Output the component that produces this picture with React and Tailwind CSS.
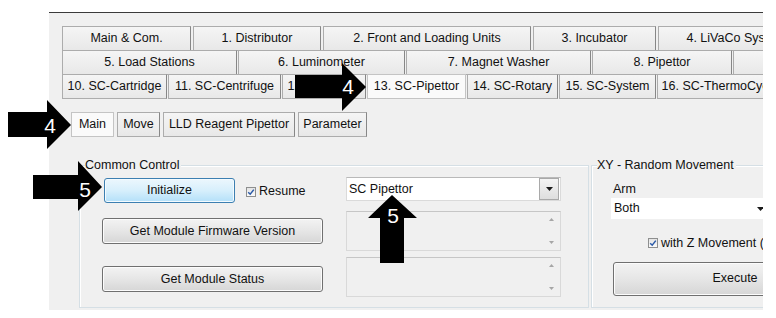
import React from 'react';

const row1 = [
  { label: 'Main & Com.', w: 'w-[129px]' },
  { label: '1. Distributor', w: 'w-[128px]' },
  { label: '2. Front and Loading Units', w: 'w-[208px]' },
  { label: '3. Incubator', w: 'w-[123px]' },
  { label: '4. LiVaCo System', w: 'w-[156px]' },
];

const row2 = [
  { label: '5. Load Stations', w: 'w-[175px]' },
  { label: '6. Luminometer', w: 'w-[167px]' },
  { label: '7. Magnet Washer', w: 'w-[185px]' },
  { label: '8. Pipettor', w: 'w-[140px]' },
  { label: '9. Reagent Storage', w: 'w-[200px]' },
];

const row3 = [
  { label: '10. SC-Cartridge', w: 'w-[105px]' },
  { label: '11. SC-Centrifuge', w: 'w-[113px]' },
  { label: '12. SC-Mixer', w: 'w-[84px]' },
  { label: '13. SC-Pipettor', w: 'w-[99px]', active: true },
  { label: '14. SC-Rotary', w: 'w-[91px]' },
  { label: '15. SC-System', w: 'w-[97px]' },
  { label: '16. SC-ThermoCycler', w: 'w-[130px]' },
];

const subTabs = [
  { label: 'Main', w: 'w-[43px]', active: true },
  { label: 'Move', w: 'w-[43px]' },
  { label: 'LLD Reagent Pipettor', w: 'w-[132px]' },
  { label: 'Parameter', w: 'w-[69px]' },
];

function Tab({ label, w, active }) {
  const look = active
    ? 'bg-[#fafafa] border-[#c4c4c4]'
    : 'bg-gradient-to-b from-[#f5f5f5] to-[#e8e8e8] border-[#acacac] border-r-[#878787]';
  return (
    <div className={`${w} ${look} shrink-0 h-full flex items-center justify-center border whitespace-nowrap overflow-hidden`}>
      {label}
    </div>
  );
}

function Button({ children, className }) {
  return (
    <div
      className={`${className} flex items-center justify-center rounded-[3px] border border-[#707070] bg-gradient-to-b from-[#f3f3f3] via-[#e6e6e6] to-[#d6d6d6] shadow-[inset_0_0_0_1px_#fcfcfc] whitespace-nowrap`}
    >
      {children}
    </div>
  );
}

function Check() {
  return (
    <div className="w-[10px] h-[10px] shrink-0 border border-[#8e8f8f] bg-gradient-to-b from-[#e4e4e4] to-[#fafafa] flex items-center justify-center">
      <svg width="8" height="8" viewBox="0 0 8 8">
        <path d="M1.2 4.2 L3.2 6.2 L6.8 1.6" fill="none" stroke="#2b5aa8" strokeWidth="1.5" />
      </svg>
    </div>
  );
}

function DropArrow() {
  return (
    <svg width="7" height="4" viewBox="0 0 7 4">
      <path d="M0 0 H7 L3.5 4 Z" fill="#1b1b1b" />
    </svg>
  );
}

function ScrollBox() {
  return (
    <div className="h-[40px] border border-[#d9d9d9] border-t-[#c6c6c6] bg-[#f0f0f0] flex justify-end">
      <div className="w-[17px] flex flex-col items-center justify-between py-[6px]">
        <svg width="5" height="3" viewBox="0 0 5 3">
          <path d="M0 3 L2.5 0 L5 3 Z" fill="#a6a6a6" />
        </svg>
        <svg width="5" height="3" viewBox="0 0 5 3">
          <path d="M0 0 H5 L2.5 3 Z" fill="#a6a6a6" />
        </svg>
      </div>
    </div>
  );
}

function GroupBox({ title, className, children }) {
  return (
    <div className={`${className} relative border border-[#d5dfe5] shadow-[inset_1px_1px_0_#ffffff]`}>
      <span className="absolute -top-[9px] left-[5px] bg-[#f0f0f0] pr-[2px] leading-[16px]">{title}</span>
      {children}
    </div>
  );
}

export default function App() {
  return (
    <div
      className="relative w-[776px] h-[318px] bg-white overflow-hidden text-[12.5px] text-[#111] leading-none"
      style={{ fontFamily: '"Liberation Sans", Arial, sans-serif' }}
    >
      {/* main window panel */}
      <div className="ml-[49px] mt-[12px] w-[714px] h-[298px] bg-[#f0f0f0] border-t border-[#3a3a3a] overflow-hidden pl-[13px] pt-[13px]">
        {/* multi-row tabs */}
        <div className="flex gap-[2px] h-[25px]">
          {row1.map((t) => (
            <Tab key={t.label} {...t} />
          ))}
        </div>
        <div className="flex gap-[1px] h-[25px] -mt-px">
          {row2.map((t) => (
            <Tab key={t.label} {...t} />
          ))}
        </div>
        <div className="flex gap-[1px] h-[25px] -mt-px">
          {row3.map((t) => (
            <Tab key={t.label} {...t} />
          ))}
        </div>

        {/* sub tabs */}
        <div className="flex gap-[3px] h-[25px] mt-[13px] ml-[9px]">
          {subTabs.map((t) => (
            <Tab key={t.label} {...t} />
          ))}
        </div>

        {/* group boxes */}
        <div className="flex gap-[2px] mt-[28px] ml-[17px] h-[143px]">
          <GroupBox title="Common Control" className="w-[510px] shrink-0 pl-[22px] pt-[11px] flex">
            <div className="w-[244px] shrink-0 flex flex-col">
              <div className="flex items-center mt-[1px] ml-[2px]">
                <div className="w-[131px] h-[25px] flex items-center justify-center rounded-[3px] border border-[#3c7fb1] bg-gradient-to-b from-[#ecf7fd] via-[#d7effc] to-[#b3e0f9] shadow-[inset_0_0_0_1px_#f4fbff]">
                  Initialize
                </div>
                <div className="ml-[11px] mt-[2px]">
                  <Check />
                </div>
                <span className="ml-[3px] mt-[1px]">Resume</span>
              </div>
              <Button className="w-[221px] h-[26px] mt-[15px]">Get Module Firmware Version</Button>
              <Button className="w-[221px] h-[26px] mt-[22px]">Get Module Status</Button>
            </div>
            <div className="w-[215px] shrink-0 flex flex-col">
              <div className="h-[24px] bg-white border border-[#dadada] border-t-[#b9b9b9] flex items-center">
                <span className="pl-[2px] flex-1">SC Pipettor</span>
                <div className="w-[20px] h-[22px] mr-px border border-[#a9a9a9] bg-gradient-to-b from-[#f4f4f4] to-[#dedede] flex items-center justify-center">
                  <DropArrow />
                </div>
              </div>
              <div className="mt-[10px]">
                <ScrollBox />
              </div>
              <div className="mt-[6px]">
                <ScrollBox />
              </div>
            </div>
          </GroupBox>

          <GroupBox title="XY - Random Movement" className="w-[300px] shrink-0 pl-[19px] pt-[16px] flex flex-col">
            <span className="ml-[2px] leading-[14px]">Arm</span>
            <div className="mt-[2px] w-[157px] h-[21px] bg-white flex items-center">
              <span className="pl-[3px] flex-1">Both</span>
              <div className="w-[16px] flex justify-center">
                <DropArrow />
              </div>
            </div>
            <div className="flex items-center ml-[37px] mt-[18px]">
              <Check />
              <span className="ml-[3px]">with Z Movement (Safe)</span>
            </div>
            <Button className="w-[244px] h-[34px] mt-[12px] ml-[2px]">Execute</Button>
          </GroupBox>
        </div>
      </div>

      {/* annotation arrows */}
      <svg className="absolute left-0 top-0 pointer-events-none" width="776" height="318" viewBox="0 0 776 318">
        <g fill="#000">
          <polygon points="8,112 47,112 47,100 71,125 47,149 47,137 8,137" />
          <polygon points="295,75 342,75 342,63 366,87 342,111 342,98 295,98" />
          <polygon points="33,175 78,175 78,161 102,187 78,211 78,199 33,199" />
          <polygon points="392,195 417,218 404,218 404,263 380,263 380,218 368,218" />
        </g>
        <g
          fill="#fff"
          stroke="#000"
          strokeWidth="2"
          paintOrder="stroke"
          fontFamily="Liberation Sans, Arial, sans-serif"
          fontSize="21"
          textAnchor="middle"
        >
          <text x="50" y="133">4</text>
          <text x="348" y="94">4</text>
          <text x="85" y="197">5</text>
          <text x="393" y="223">5</text>
        </g>
      </svg>
    </div>
  );
}
